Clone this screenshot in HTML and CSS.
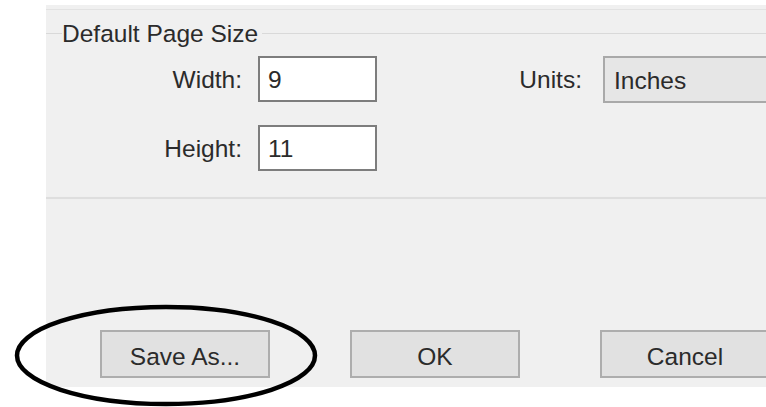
FILE: index.html
```html
<!DOCTYPE html>
<html lang="en">
<head>
<meta charset="utf-8">
<title>Page Setup</title>
<link rel="stylesheet" href="styles.css">
</head>
<body>
<div class="dialog">
  <div class="topline"></div>
  <div class="group">
    <div class="legend">
      <span class="legend-line legend-line-short"></span>
      <span class="legend-text">Default Page Size</span>
      <span class="legend-line legend-line-fill"></span>
    </div>
    <div class="field-row">
      <label class="field-label" for="width">Width:</label>
      <input class="text-input" id="width" type="text" value="9">
      <label class="units-label" for="units">Units:</label>
      <div class="select" id="units">Inches</div>
    </div>
    <div class="field-row field-row-second">
      <label class="field-label" for="height">Height:</label>
      <input class="text-input" id="height" type="text" value="11">
    </div>
  </div>
  <div class="separator"></div>
  <div class="buttons">
    <button class="btn" type="button">Save As...</button>
    <button class="btn" type="button">OK</button>
    <button class="btn" type="button">Cancel</button>
  </div>
</div>
<svg class="callout" width="766" height="407" viewBox="0 0 766 407" aria-hidden="true">
  <ellipse cx="166" cy="355.5" rx="149" ry="48.5" fill="none" stroke="#000" stroke-width="4.5"/>
</svg>
</body>
</html>
```

FILE: styles.css
```css
html, body {
  margin: 0;
  padding: 0;
  background: #ffffff;
  overflow: hidden;
}

body {
  width: 766px;
  height: 407px;
  position: relative;
  font-family: "Liberation Sans", Arial, sans-serif;
  font-size: 24.5px;
  color: #2b2b2b;
}

.dialog {
  margin: 5px 0 0 46px;
  width: 720px;
  height: 382px;
  background: #f0f0f0;
  display: flex;
  flex-direction: column;
  overflow: hidden;
  box-sizing: border-box;
}

.topline {
  margin-top: 4px;
  height: 1px;
  background: #e2e2e2;
  flex: none;
}

.group {
  margin-top: 10px;
  flex: none;
}

.legend {
  display: flex;
  align-items: center;
  height: 28px;
  line-height: 28px;
}

.legend-line {
  height: 1px;
  background: #d9d9d9;
  margin-top: -1px;
}

.legend-line-short {
  width: 16px;
  flex: none;
}

.legend-text {
  padding: 0 4px 0 0;
  white-space: nowrap;
}

.legend-line-fill {
  flex: 1;
}

.field-row {
  display: flex;
  align-items: center;
  margin-top: 8px;
  height: 46px;
}

.field-row-second {
  margin-top: 23px;
}

.field-label {
  width: 196px;
  flex: none;
  text-align: right;
  margin-right: 16px;
  padding-top: 2px;
}

.text-input {
  width: 119px;
  height: 46px;
  box-sizing: border-box;
  border: 2px solid #7d7d7d;
  background: #ffffff;
  font: inherit;
  color: #2b2b2b;
  padding: 2px 0 0 8px;
  margin: 0;
  flex: none;
  outline: none;
}

.units-label {
  width: 205px;
  flex: none;
  text-align: right;
  margin-right: 21px;
  padding-top: 2px;
}

.select {
  width: 200px;
  height: 47px;
  box-sizing: border-box;
  border: 2px solid #a9a9a9;
  background: #e6e6e6;
  padding: 2px 0 0 9px;
  line-height: 41px;
  flex: none;
}

.separator {
  margin-top: 26px;
  height: 2px;
  background: #dedede;
  box-shadow: 0 0 1px #e4e4e4;
  flex: none;
}

.buttons {
  margin-top: auto;
  margin-bottom: 9px;
  padding-left: 54px;
  display: flex;
  gap: 80px;
}

.btn {
  width: 170px;
  height: 48px;
  flex: none;
  box-sizing: border-box;
  border: 2px solid #adadad;
  background: #e1e1e1;
  font: inherit;
  color: #2b2b2b;
  padding: 5px 0 0;
  margin: 0;
}

.callout {
  position: absolute;
  left: 0;
  top: 0;
  pointer-events: none;
}
```
